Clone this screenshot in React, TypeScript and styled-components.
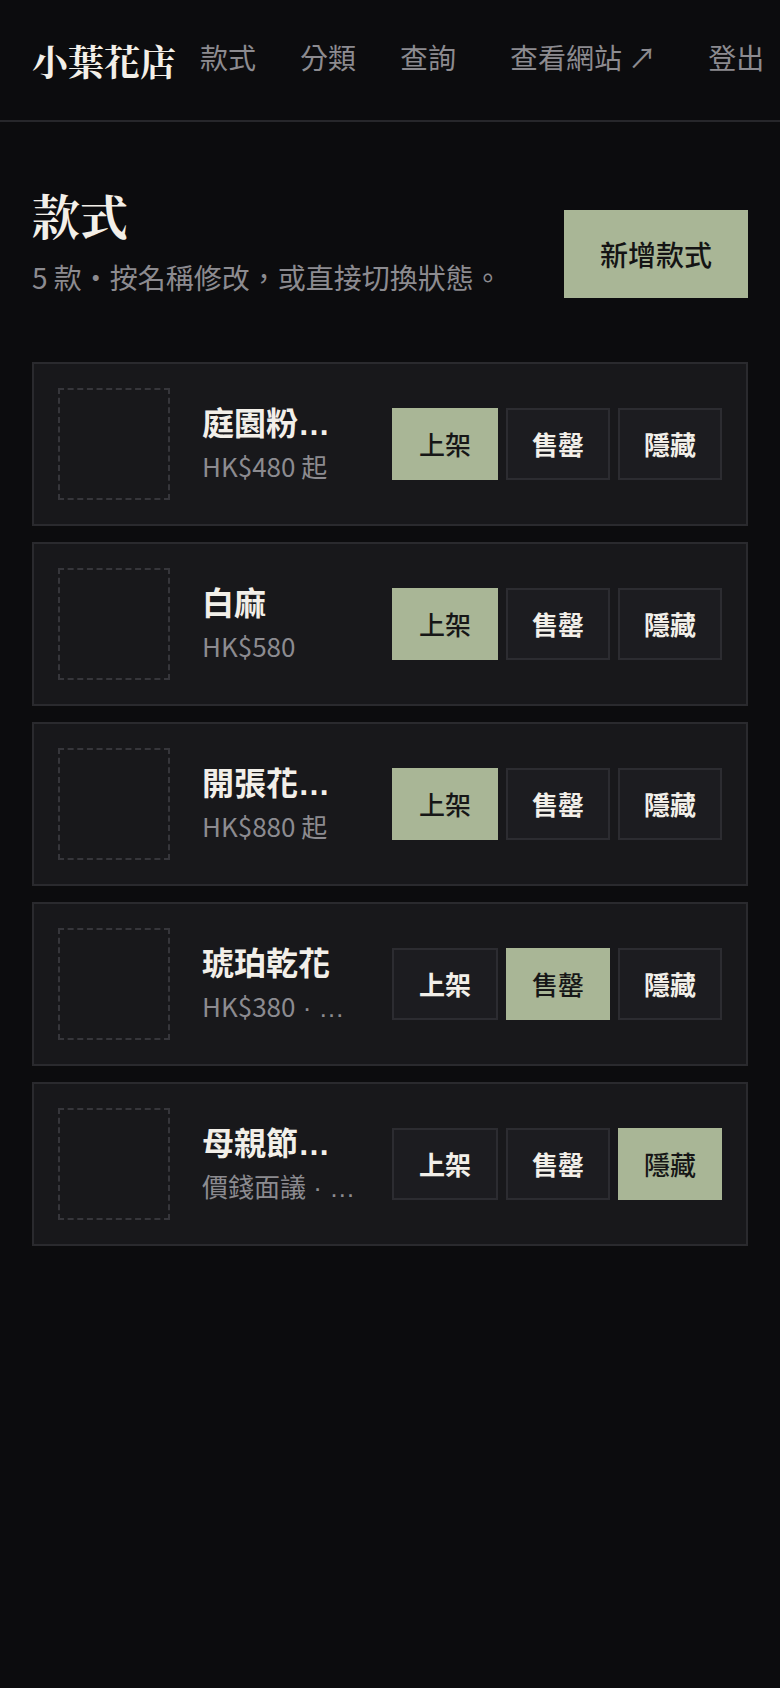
import styled, { createGlobalStyle } from "styled-components";

const GlobalStyle = createGlobalStyle`
  html, body {
    margin: 0;
    padding: 0;
    background: #0c0c0e;
  }
  body {
    font-family: "Noto Sans CJK TC", "Noto Sans", sans-serif;
    color: #f2efe9;
  }
  * {
    box-sizing: border-box;
  }
`;

const Page = styled.div`
  min-height: 1688px;
  background: #0c0c0e;
  overflow: hidden;
`;

const Header = styled.header`
  display: flex;
  align-items: center;
  gap: 24px;
  height: 122px;
  padding: 0 32px;
  border-bottom: 2px solid #27272b;
  white-space: nowrap;
`;

const Logo = styled.div`
  font-family: "Noto Serif CJK TC", "Noto Serif TC", "Liberation Serif", serif;
  font-size: 36px;
  font-weight: 700;
  color: #f3efe8;
  flex-shrink: 0;
`;

const Nav = styled.nav`
  display: flex;
  align-items: center;
  gap: 44px;
  flex-shrink: 0;
  padding-bottom: 5px;
`;

const NavLink = styled.a<{ $spaced?: number }>`
  font-size: 28px;
  line-height: 1.4;
  color: #8c8b90;
  text-decoration: none;
  margin-left: ${(props) => props.$spaced || 0}px;
`;

const Main = styled.main`
  padding: 64px 32px;
`;

const TitleRow = styled.div`
  display: flex;
  align-items: flex-end;
  justify-content: space-between;
  margin-bottom: 64px;
`;

const Title = styled.h1`
  margin: 0;
  font-family: "Noto Serif CJK TC", "Noto Serif TC", "Liberation Serif", serif;
  font-size: 48px;
  font-weight: 700;
  line-height: 1.2;
  color: #f3efe8;
`;

const Subtitle = styled.p`
  margin: 12px 0 0;
  font-size: 28px;
  line-height: 1.5;
  color: #8c8b90;
`;

const PrimaryButton = styled.button`
  flex-shrink: 0;
  height: 88px;
  padding: 0 36px;
  border: 0;
  background: #a9b696;
  color: #141414;
  font-family: inherit;
  font-size: 28px;
  font-weight: 500;
`;

const List = styled.div`
  display: flex;
  flex-direction: column;
  gap: 16px;
`;

const Card = styled.div`
  display: flex;
  align-items: center;
  gap: 32px;
  padding: 24px;
  border: 2px solid #2a2a2e;
  background: #18181b;
`;

const Thumb = styled.div`
  width: 112px;
  height: 112px;
  flex-shrink: 0;
  border: 2px dashed #36363b;
`;

const Info = styled.div`
  flex: 1;
  min-width: 0;
`;

// the block font is latin so the cut-off ellipsis sits on the baseline
const Name = styled.div`
  font-family: "Liberation Sans", "Noto Sans CJK TC", sans-serif;
  font-size: 32px;
  font-weight: 700;
  line-height: 1.3;
  color: #f2efe9;
  white-space: nowrap;
  overflow: hidden;
  text-overflow: ellipsis;
`;

const Meta = styled.div`
  margin-top: 2px;
  font-family: "Liberation Sans", "Noto Sans CJK TC", sans-serif;
  font-size: 26px;
  line-height: 1.4;
  color: #8c8b90;
  white-space: nowrap;
  overflow: hidden;
  text-overflow: ellipsis;
`;

const CjkText = styled.span`
  font-family: "Noto Sans CJK TC", sans-serif;
`;

const Dot = styled.span`
  font-family: "Liberation Sans", sans-serif;
`;

const StatusGroup = styled.div`
  display: flex;
  gap: 8px;
  flex-shrink: 0;
`;

const StatusButton = styled.button<{ $active?: boolean }>`
  height: 72px;
  padding: 0 24px;
  border: 2px solid ${(props) => (props.$active ? "#a9b696" : "#2c2c31")};
  background: ${(props) => (props.$active ? "#a9b696" : "#1c1c20")};
  color: ${(props) => (props.$active ? "#161616" : "#f2efe9")};
  font-family: inherit;
  font-size: 26px;
  font-weight: ${(props) => (props.$active ? 500 : 700)};
  &:first-child {
    padding: 0 25px;
  }
`;

const STATUSES = ["上架", "售罄", "隱藏"];

const items = [
  { id: 1, name: "庭園粉玫瑰花束", price: "HK$480 起", note: "", status: "上架" },
  { id: 2, name: "白麻", price: "HK$580", note: "", status: "上架" },
  { id: 3, name: "開張花籃大型", price: "HK$880 起", note: "", status: "上架" },
  { id: 4, name: "琥珀乾花", price: "HK$380", note: "暫時售罄", status: "售罄" },
  { id: 5, name: "母親節康乃馨", price: "價錢面議", note: "暫不公開", status: "隱藏" }
];

export default function App() {
  return (
    <Page>
      <GlobalStyle />
      <Header>
        <Logo>小葉花店</Logo>
        <Nav>
          <NavLink>款式</NavLink>
          <NavLink>分類</NavLink>
          <NavLink>查詢</NavLink>
          <NavLink $spaced={10}>查看網站 ↗</NavLink>
          <NavLink $spaced={8}>登出</NavLink>
        </Nav>
      </Header>
      <Main>
        <TitleRow>
          <div>
            <Title>款式</Title>
            <Subtitle>5 款・按名稱修改，或直接切換狀態。</Subtitle>
          </div>
          <PrimaryButton>新增款式</PrimaryButton>
        </TitleRow>
        <List>
          {items.map((item) => (
            <Card key={item.id}>
              <Thumb />
              <Info>
                <Name>
                  <CjkText>{item.name}</CjkText>
                </Name>
                <Meta>
                  <CjkText>{item.price}</CjkText>
                  {item.note && (
                    <>
                      <Dot> · </Dot>
                      <CjkText>{item.note}</CjkText>
                    </>
                  )}
                </Meta>
              </Info>
              <StatusGroup>
                {STATUSES.map((s) => (
                  <StatusButton key={s} $active={s === item.status}>
                    {s}
                  </StatusButton>
                ))}
              </StatusGroup>
            </Card>
          ))}
        </List>
      </Main>
    </Page>
  );
}
